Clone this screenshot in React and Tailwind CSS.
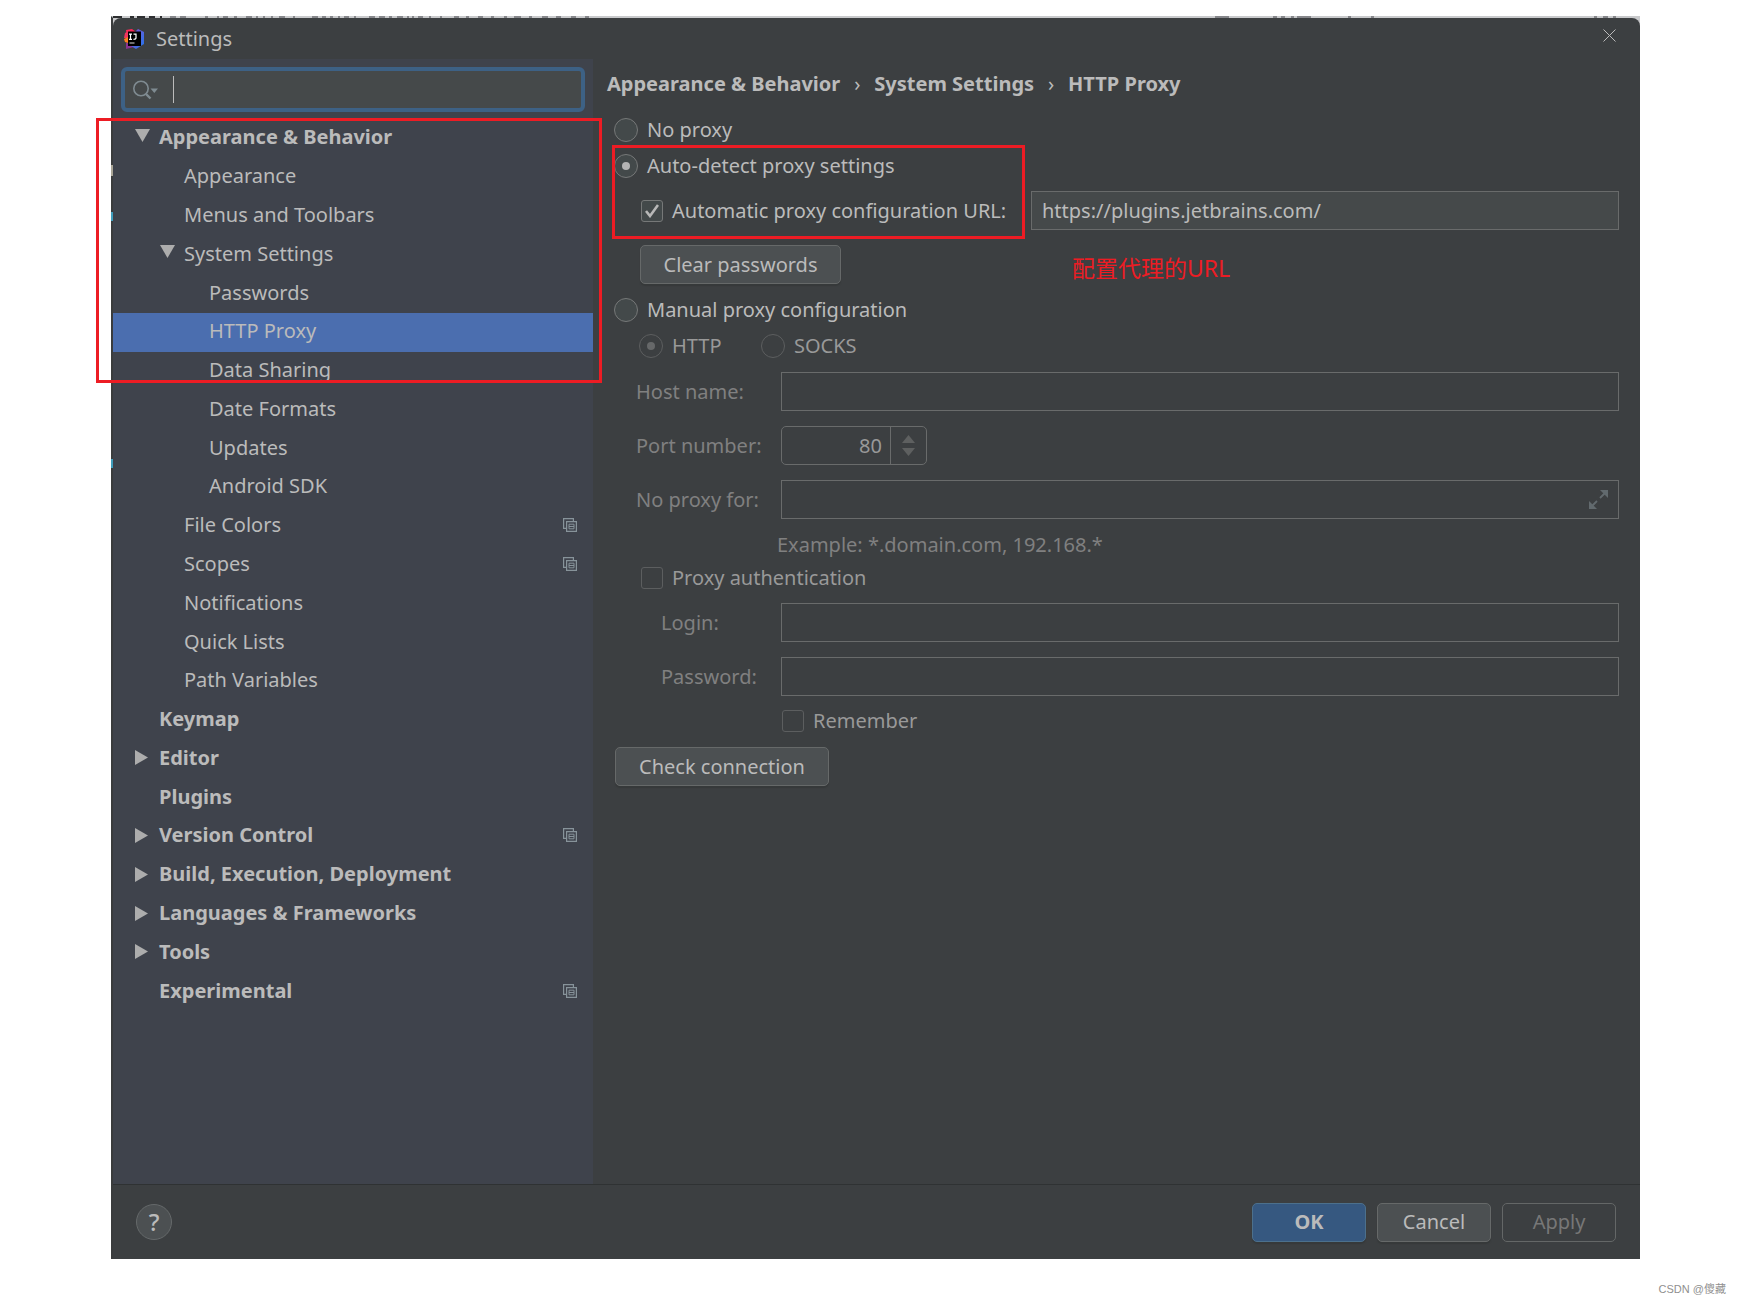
import { useState } from 'react'

const TREE = [
  { label: 'Appearance & Behavior', level: 0, arrow: 'down' },
  { label: 'Appearance', level: 1 },
  { label: 'Menus and Toolbars', level: 1 },
  { label: 'System Settings', level: 1, arrow: 'down' },
  { label: 'Passwords', level: 2 },
  { label: 'HTTP Proxy', level: 2 },
  { label: 'Data Sharing', level: 2 },
  { label: 'Date Formats', level: 2 },
  { label: 'Updates', level: 2 },
  { label: 'Android SDK', level: 2 },
  { label: 'File Colors', level: 1, project: true },
  { label: 'Scopes', level: 1, project: true },
  { label: 'Notifications', level: 1 },
  { label: 'Quick Lists', level: 1 },
  { label: 'Path Variables', level: 1 },
  { label: 'Keymap', level: 0 },
  { label: 'Editor', level: 0, arrow: 'right' },
  { label: 'Plugins', level: 0 },
  { label: 'Version Control', level: 0, arrow: 'right', project: true },
  { label: 'Build, Execution, Deployment', level: 0, arrow: 'right' },
  { label: 'Languages & Frameworks', level: 0, arrow: 'right' },
  { label: 'Tools', level: 0, arrow: 'right' },
  { label: 'Experimental', level: 0, project: true },
]

const INDENT = ['pl-[22px]', 'pl-[47px]', 'pl-[72px]']

const field = 'h-[39px] min-w-0 flex-1 border border-[#696b6b] px-[10px] outline-none'
const button = 'h-[39px] rounded-[5px] border border-[#666969] bg-[#4c5052] text-[#bbbbbb] shadow-[0_2px_1px_#36393a]'

// Bits of the browser window that stick out above the dialog
const BEHIND = [
  [0, 9], [17, 4], [24, 8], [36, 6], [47, 2], [57, 6], [67, 6], [92, 3], [104, 2], [110, 5], [121, 3], [133, 6],
  [143, 2], [150, 2], [158, 2], [166, 6], [180, 2], [199, 6], [209, 4], [217, 3], [225, 2], [231, 5], [241, 2],
  [256, 6], [266, 6], [276, 3], [284, 6], [294, 2], [299, 2], [305, 5], [316, 2], [327, 2], [341, 5], [353, 3],
  [365, 5], [378, 3], [391, 3], [401, 7], [416, 3], [429, 6], [443, 5], [458, 5], [472, 4],
  [1102, 14], [1160, 4], [1168, 4], [1178, 3], [1184, 14], [1235, 3], [1258, 3], [1481, 3], [1490, 5], [1500, 3],
]

function BehindStrip() {
  return (
    <svg width="100%" height="2" className="absolute inset-x-0 -top-0.5" aria-hidden="true">
      {BEHIND.map(([x, w]) => (
        <rect key={x} x={x} y="0" width={w} height="2" fill={x < 48 ? '#2e2f31' : '#85868a'} />
      ))}
    </svg>
  )
}

function IdeaLogo() {
  return (
    <svg width="20" height="20" viewBox="0 0 20 20" aria-hidden="true">
      <defs>
        <linearGradient id="idea-blue" x1="0" y1="0" x2="1" y2="1">
          <stop offset="0" stopColor="#8a4fd0" />
          <stop offset="1" stopColor="#1f78ee" />
        </linearGradient>
      </defs>
      <path d="M2 1 8 0l4 3v5H3z" fill="#fe2857" />
      <path d="M1 4 5 2v7H0z" fill="#f0355f" />
      <path d="M0 10l4-2v6l-3-1z" fill="#fc801d" />
      <path d="M2 14h8v4l-8 2z" fill="#8a3391" />
      <path d="M11 3 14 0l6 3v12l-8 5-5-3z" fill="url(#idea-blue)" />
      <path d="M4 2.500h13v14.500H4z" fill="#000" />
      <path d="M5 5.200h3M6.500 5v5.500M5 10.300h3M9.500 5.200h2.500v3.800q0 1.300-2.500 1.300" fill="none" stroke="#fff" strokeWidth="1.200" />
      <path d="M5.500 14h5" stroke="#bbb" strokeWidth="1.200" />
    </svg>
  )
}

function SearchIcon() {
  return (
    <svg width="25" height="20" viewBox="0 0 25 20" fill="none" aria-hidden="true">
      <circle cx="8" cy="8.500" r="7.200" stroke="#7f8b91" strokeWidth="1.600" />
      <path d="M13 14l4.500 4.500" stroke="#7f8b91" strokeWidth="2.400" />
      <path d="M17.500 8.500h7.500l-3.700 4.500z" fill="#7f8b91" />
    </svg>
  )
}

function Arrow({ dir }) {
  if (dir === 'down') {
    return (
      <svg width="15" height="13" viewBox="0 0 15 13" className="mb-1" aria-hidden="true">
        <path d="M0 0h15L7.500 13z" fill="#adadad" />
      </svg>
    )
  }
  return (
    <svg width="13" height="15" viewBox="0 0 13 15" aria-hidden="true">
      <path d="M0 0v15l13-7.500z" fill="#adadad" />
    </svg>
  )
}

function ProjectIcon() {
  return (
    <svg width="14" height="14" viewBox="0 0 14 14" fill="none" stroke="#87939a" strokeWidth="1.200" className="ml-auto mr-4" aria-hidden="true">
      <path d="M3 10.400H.600V.600h9.800V3" />
      <path d="M3.600 3.600h9.800v9.800H3.600z" />
      <path d="M6 6.200h5v4.600H6zM6 8.500h5" strokeWidth="1" />
    </svg>
  )
}

function ExpandIcon() {
  return (
    <svg width="19" height="19" viewBox="0 0 19 19" aria-hidden="true">
      <path d="M11 0h8v8zM0 11v8h8z" fill="#626a6e" />
      <path d="M11 8l5-5M8 11l-5 5" stroke="#626a6e" strokeWidth="1.800" />
    </svg>
  )
}

function Radio({ label, className = '', ...props }) {
  return (
    <label className={`flex h-9 items-center gap-[9px] ${props.disabled ? 'text-[#999999]' : ''} ${className}`}>
      <span className="grid place-items-center">
        <input
          type="radio"
          className="peer col-start-1 row-start-1 size-6 appearance-none rounded-full border border-[#767878] bg-[#43494a] disabled:border-[#5c5e5f] disabled:bg-transparent"
          {...props}
        />
        <span className="pointer-events-none col-start-1 row-start-1 hidden size-2 rounded-full bg-[#b4b4b4] peer-checked:block peer-disabled:bg-[#666869]" />
      </span>
      {label}
    </label>
  )
}

function Checkbox({ label, className = '', ...props }) {
  return (
    <label className={`flex items-center gap-[9px] ${props.disabled ? 'text-[#999999]' : ''} ${className}`}>
      <span className="grid place-items-center">
        <input
          type="checkbox"
          className="peer col-start-1 row-start-1 size-[22px] appearance-none rounded-[3px] border border-[#767878] bg-[#43494a] disabled:border-[#5c5e5f] disabled:bg-transparent"
          {...props}
        />
        <svg width="14" height="14" viewBox="0 0 14 14" className="pointer-events-none col-start-1 row-start-1 hidden peer-checked:block" aria-hidden="true">
          <path d="M1 7l4 5 8-11" fill="none" stroke="#b8b8b8" strokeWidth="2.600" />
        </svg>
      </span>
      {label}
    </label>
  )
}

function Sidebar({ selected, onSelect }) {
  return (
    <aside className="w-[480px] shrink-0 bg-[#3f434c]">
      <div className="mx-2 mt-2 flex h-[45px] items-center rounded-[6px] border-4 border-[#3d6185] bg-[#45494a] pl-2">
        <SearchIcon />
        <span className="ml-[15px] h-[27px] w-px bg-[#bbbbbb]" />
        <input type="search" aria-label="Search settings" className="h-full min-w-0 flex-1 bg-transparent pl-1 outline-none" />
      </div>
      <nav className="relative mt-[7px]">
        <ul className="grid h-[892px] auto-rows-fr">
          {TREE.map(item => (
            <li key={item.label}>
              <button
                onClick={() => onSelect(item.label)}
                className={`flex h-full w-full items-center pb-0.5 text-left ${INDENT[item.level]} ${
                  item.level === 0 ? 'font-bold' : ''
                } ${item.label === selected ? 'bg-[#4b6eaf]' : ''}`}
              >
                <span className="w-6 shrink-0">{item.arrow && <Arrow dir={item.arrow} />}</span>
                {item.label}
                {item.project && <ProjectIcon />}
              </button>
            </li>
          ))}
        </ul>
        {/* Marks the path down to HTTP Proxy */}
        <div className="pointer-events-none absolute -left-[17px] -right-[9px] -top-px h-[265px] border-[3px] border-[#ed1c24]" />
      </nav>
    </aside>
  )
}

function ProxyForm() {
  const [mode, setMode] = useState('auto')
  const [usePac, setUsePac] = useState(true)
  const manual = mode === 'manual'

  return (
    <main className="min-w-0 flex-1 pl-[14px] pr-[21px]">
      <h1 className="mb-[3px] flex h-[50px] items-center font-bold">
        Appearance &amp; Behavior
        <span className="w-[34px] text-center font-normal">›</span>
        System Settings
        <span className="w-[34px] text-center font-normal">›</span>
        HTTP Proxy
      </h1>

      <div className="pl-[7px]">
        <Radio name="mode" label="No proxy" checked={mode === 'none'} onChange={() => setMode('none')} />
        <div className="relative">
          <Radio name="mode" label="Auto-detect proxy settings" checked={mode === 'auto'} onChange={() => setMode('auto')} />
          <div className="mt-[7px] flex items-center pl-[27px]">
            <Checkbox
              label="Automatic proxy configuration URL:"
              className="w-[390px] shrink-0 whitespace-nowrap"
              checked={usePac}
              onChange={e => setUsePac(e.target.checked)}
            />
            <input aria-label="Proxy configuration URL" defaultValue="https://plugins.jetbrains.com/" className={`${field} bg-[#45494a]`} />
          </div>
          <div className="pointer-events-none absolute -left-0.5 -top-[3px] h-[94px] w-[413px] border-[3px] border-[#ed1c24]" />
          <span className="pointer-events-none absolute left-[458px] top-[104px] text-[23px] leading-8 text-[#ed1c24]">配置代理的URL</span>
        </div>
        <button className={`ml-[26px] mt-[15px] w-[201px] ${button}`}>Clear passwords</button>

        <Radio name="mode" label="Manual proxy configuration" className="mt-2" checked={manual} onChange={() => setMode('manual')} />
        <div className="flex pl-[25px]">
          <Radio name="protocol" label="HTTP" className="w-[122px]" defaultChecked disabled={!manual} />
          <Radio name="protocol" label="SOCKS" disabled={!manual} />
        </div>

        <div className="mt-2 flex items-center pl-[22px] text-[#808080]">
          <label htmlFor="host" className="w-[145px]">Host name:</label>
          <input id="host" disabled={!manual} className={field} />
        </div>
        <div className="mt-[15px] flex items-center pl-[22px] text-[#808080]">
          <label htmlFor="port" className="w-[145px]">Port number:</label>
          <div className="flex h-[39px] w-[146px] rounded-[5px] border border-[#696b6b]">
            <input id="port" defaultValue="80" disabled={!manual} className="min-w-0 flex-1 border-r border-[#696b6b] pr-2 text-right text-[#999999]" />
            <div className="flex w-[35px] flex-col items-center justify-center gap-[5px]">
              <button aria-label="Increase" disabled={!manual}>
                <svg width="13" height="8" viewBox="0 0 13 8" className="block"><path d="M0 8h13L6.500 0z" fill="#5e6060" /></svg>
              </button>
              <button aria-label="Decrease" disabled={!manual}>
                <svg width="13" height="8" viewBox="0 0 13 8" className="block"><path d="M0 0h13L6.500 8z" fill="#5e6060" /></svg>
              </button>
            </div>
          </div>
        </div>
        <div className="mt-[15px] flex items-center pl-[22px] text-[#808080]">
          <label htmlFor="exclude" className="w-[145px]">No proxy for:</label>
          <div className="flex h-[39px] min-w-0 flex-1 items-center border border-[#696b6b] pr-[10px]">
            <input id="exclude" disabled={!manual} className="h-full min-w-0 flex-1 px-[10px]" />
            <button aria-label="Expand" disabled={!manual}><ExpandIcon /></button>
          </div>
        </div>
        <p className="mt-[14px] pl-[163px] leading-6 text-[#808080]">Example: *.domain.com, 192.168.*</p>

        <Checkbox label="Proxy authentication" className="mt-[3px] h-9 pl-[27px]" disabled={!manual} />
        <div className="mt-[7px] flex items-center pl-[47px] text-[#808080]">
          <label htmlFor="login" className="w-[120px]">Login:</label>
          <input id="login" disabled={!manual} className={field} />
        </div>
        <div className="mt-[15px] flex items-center pl-[47px] text-[#808080]">
          <label htmlFor="password" className="w-[120px]">Password:</label>
          <input id="password" type="password" disabled={!manual} className={field} />
        </div>
        <Checkbox label="Remember" className="mt-[7px] h-9 pl-[168px]" disabled={!manual} />
        <button className={`ml-px mt-2 w-[214px] ${button}`}>Check connection</button>
      </div>
    </main>
  )
}

export default function App() {
  const [selected, setSelected] = useState('HTTP Proxy')

  return (
    <div className="relative flex min-h-screen flex-col bg-white pb-11 pl-[111px] pr-[101px] pt-4 font-['Noto_Sans','Noto_Sans_CJK_SC',sans-serif] text-[20px] leading-7 text-[#bbbbbb]">
      <div className="relative flex flex-1 flex-col border-l-2 border-t-2 border-l-[#3a3c3d] border-t-[#c9cacc] bg-[#c9cacc]">
        <BehindStrip />
        <span className="absolute -left-0.5 top-[147px] h-[11px] w-0.5 bg-[#a9a596]" />
        <span className="absolute -left-0.5 top-[194px] h-[9px] w-0.5 bg-[#3f9dbb]" />
        <span className="absolute -left-0.5 top-[441px] h-[9px] w-0.5 bg-[#3f9dbb]" />
        <div className="flex flex-1 flex-col rounded-t-[8px] bg-[#3c3f41]">
          <header className="flex h-[41px] items-center pl-[11px] pr-[24px]">
            <IdeaLogo />
            <span className="ml-3">Settings</span>
            <button aria-label="Close" className="mb-1.5 ml-auto">
              <svg width="13" height="13" viewBox="0 0 13 13" className="block"><path d="M.500.500l12 12M12.500.500l-12 12" stroke="#bbbbbb" strokeWidth="1" /></svg>
            </button>
          </header>
          <div className="flex flex-1">
            <Sidebar selected={selected} onSelect={setSelected} />
            <ProxyForm />
          </div>
          <footer className="flex h-[75px] items-center gap-[11px] border-t border-[#2f3233] pl-[23px] pr-6">
            <button aria-label="Help" className="mr-auto size-9 rounded-full border border-[#65696a] bg-[#4c5052] text-[24px] font-medium">?</button>
            <button className="h-[39px] w-[114px] rounded-[5px] border border-[#4c708c] bg-[#365880] font-bold shadow-[0_2px_1px_#36393a]">OK</button>
            <button className={`w-[114px] ${button}`}>Cancel</button>
            <button disabled className="h-[39px] w-[114px] rounded-[5px] border border-[#646767] text-[#777777]">Apply</button>
          </footer>
        </div>
      </div>
      <span className="absolute bottom-1 right-[15px] font-['Liberation_Sans','Noto_Sans_CJK_SC',sans-serif] text-[11px] leading-5 text-[#8f8f8f]">CSDN @傻藏</span>
    </div>
  )
}
